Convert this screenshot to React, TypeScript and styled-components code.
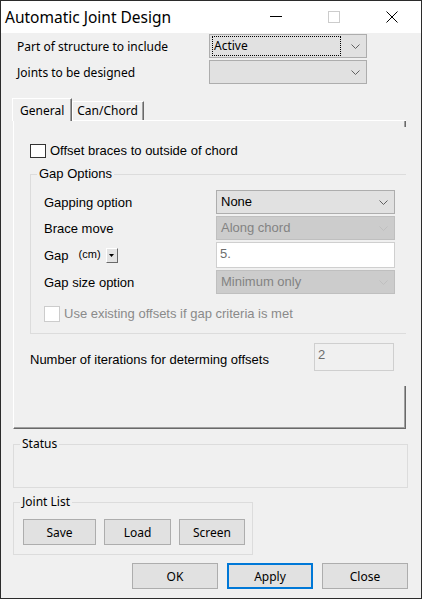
import React from 'react'
import styled, { createGlobalStyle } from 'styled-components'

const GlobalStyle = createGlobalStyle`
  html, body {
    margin: 0;
    padding: 0;
    background: #f0f0f0;
  }
  * {
    box-sizing: border-box;
  }
`

const ui = `"Noto Sans", "Open Sans", sans-serif`
const classic = `"Liberation Sans", Arial, sans-serif`

const Window = styled.div`
  width: 422px;
  height: 599px;
  border: 1px solid #2b2b2b;
  background: #f0f0f0;
  display: flex;
  flex-direction: column;
  font-family: ${ui};
  font-size: 12px;
  color: #000;
`

const TitleBar = styled.div`
  height: 32px;
  background: #fff;
  display: flex;
  align-items: center;
`

const Title = styled.div`
  flex: 1;
  padding-left: 4px;
  font-size: 15.5px;
  color: #000;
`

const CaptionButton = styled.div`
  width: 58px;
  height: 32px;
  display: flex;
  align-items: center;
  justify-content: center;
`

const Content = styled.div`
  flex: 1;
  display: flex;
  flex-direction: column;
  padding: 1px 13px 9px 12px;
`

const TopRows = styled.div`
  display: flex;
  flex-direction: column;
  gap: 2px;
`

const TopRow = styled.div`
  display: grid;
  grid-template-columns: 196px 158px;
  align-items: center;
  height: 24px;
`

const TopLabel = styled.div`
  padding-left: 4px;
`

const Combo = styled.div<{ $disabled?: boolean; $classic?: boolean }>`
  height: 24px;
  display: flex;
  align-items: center;
  padding: 0 6px 0 2px;
  border: 1px solid ${p => (p.$disabled ? '#bfbfbf' : '#adadad')};
  background: ${p => (p.$disabled ? '#cccccc' : '#e1e1e1')};
  color: ${p => (p.$disabled ? '#838383' : '#000')};
  font-family: ${p => (p.$classic ? classic : ui)};
  font-size: ${p => (p.$classic ? '13px' : '12px')};
`

const ComboText = styled.div<{ $focused?: boolean }>`
  flex: 1;
  height: 20px;
  line-height: 18px;
  margin-right: 10px;
  padding-left: 1px;
  border: 1px dotted ${p => (p.$focused ? '#000' : 'transparent')};
  white-space: nowrap;
`

const TabStrip = styled.div`
  margin-top: 14px;
  display: flex;
  align-items: flex-end;
  height: 22px;
`

const Tab = styled.div<{ $active?: boolean }>`
  position: relative;
  z-index: 1;
  height: ${p => (p.$active ? '23px' : '19px')};
  margin-bottom: ${p => (p.$active ? '-1px' : '0')};
  margin-left: ${p => (p.$active ? '-1px' : '0')};
  padding: ${p => (p.$active ? '3px 7px 0 7px' : '0 5px 0 4px')};
  background: #f0f0f0;
  border-top: 1px solid #fff;
  border-left: 1px solid #fff;
  border-right: 1px solid #696969;
  box-shadow: inset -1px 0 #a0a0a0;
  line-height: 18px;
`

const Panel = styled.div`
  height: 309px;
  width: 393px;
  border-top: 1px solid #fff;
  border-left: 1px solid #fff;
  border-bottom: 1px solid #696969;
  box-shadow: inset 0 -1px #a0a0a0;
  display: flex;
  flex-direction: column;
`

const PanelEdge = styled.div<{ $h: number }>`
  height: ${p => p.$h}px;
  border-right: 1px solid #696969;
  box-shadow: inset -1px 0 #a0a0a0;
`

const Page = styled.div`
  height: 259px;
  padding: 16px 0 0 16px;
  display: flex;
  flex-direction: column;
  font-family: ${classic};
  font-size: 13px;
`

const CheckRow = styled.label<{ $disabled?: boolean }>`
  display: flex;
  align-items: center;
  gap: 4px;
  height: 15px;
  color: ${p => (p.$disabled ? '#8a8a8a' : '#000')};
`

const CheckBox = styled.span<{ $disabled?: boolean }>`
  width: 16px;
  height: ${p => (p.$disabled ? '16px' : '14px')};
  background: #fff;
  border: 1px solid ${p => (p.$disabled ? '#cccccc' : '#333333')};
`

const Group = styled.div<{ $open?: boolean }>`
  position: relative;
  border: 1px solid #dcdcdc;
  border-right: ${p => (p.$open ? 'none' : '1px solid #dcdcdc')};
`

const GroupCaption = styled.span`
  position: absolute;
  top: -9px;
  left: 6px;
  padding: 0 2px;
  line-height: 16px;
  background: #f0f0f0;
`

const GapGroup = styled(Group)`
  margin-top: 16px;
  padding: 15px 0 12px 13px;
  display: flex;
  flex-direction: column;
`

const FieldGrid = styled.div`
  display: grid;
  grid-template-columns: 172px 179px;
  row-gap: 2px;
  align-items: center;
  margin-bottom: 12px;
`

const FieldLabel = styled.div`
  display: flex;
  align-items: center;
`

const Unit = styled.span`
  font-size: 11px;
  margin: -2px 5px 0 10px;
`

const UnitButton = styled.span`
  width: 12px;
  height: 15px;
  background: #e3e3e3;
  border-top: 1px solid #fff;
  border-left: 1px solid #fff;
  border-right: 1px solid #696969;
  border-bottom: 1px solid #696969;
  display: flex;
  align-items: center;
  justify-content: center;
`

const TextField = styled.div<{ $h: number; $bg: string }>`
  height: ${p => p.$h}px;
  border: 1px solid #cfcfcf;
  background: ${p => p.$bg};
  color: #6d6d6d;
  padding: 3px 0 0 3px;
  line-height: 15px;
`

const IterRow = styled.div`
  margin-top: 9px;
  display: grid;
  grid-template-columns: 284px 80px;
  align-items: center;
`

const IterLabel = styled.div`
  padding-top: 4px;
`

const StatusGroup = styled(Group)`
  margin-top: 15px;
  height: 44px;
`

const JointGroup = styled(Group)`
  margin-top: 14px;
  width: 240px;
  padding: 16px 0 9px 9px;
  display: flex;
  gap: 8px;
`

const Button = styled.button<{ $w: number; $default?: boolean }>`
  width: ${p => p.$w}px;
  height: 26px;
  margin: 0;
  padding: 0;
  background: #e1e1e1;
  border: ${p => (p.$default ? '2px solid #0078d7' : '1px solid #adadad')};
  font-family: ${ui};
  font-size: 12px;
  color: #000;
`

const ButtonBar = styled.div`
  margin-top: 8px;
  display: flex;
  justify-content: flex-end;
  gap: 9px;
`

const Chevron = ({ color = '#606060' }: { color?: string }) => (
  <svg width="9" height="5" viewBox="0 0 9 5">
    <polyline points="0.5,0.5 4.5,4.5 8.5,0.5" fill="none" stroke={color} strokeWidth="1" />
  </svg>
)

export default function App() {
  return (
    <>
      <GlobalStyle />
      <Window>
        <TitleBar>
          <Title>Automatic Joint Design</Title>
          <CaptionButton>
            <svg width="12" height="12" viewBox="0 0 12 12">
              <line x1="0" y1="5.5" x2="12" y2="5.5" stroke="#000" strokeWidth="1" />
            </svg>
          </CaptionButton>
          <CaptionButton>
            <svg width="12" height="12" viewBox="0 0 12 12">
              <rect x="0.5" y="0.5" width="11" height="11" fill="none" stroke="#cccccc" strokeWidth="1" />
            </svg>
          </CaptionButton>
          <CaptionButton>
            <svg width="12" height="12" viewBox="0 0 12 12">
              <path d="M0.5 0.5 L11.5 11.5 M11.5 0.5 L0.5 11.5" stroke="#000" strokeWidth="1" />
            </svg>
          </CaptionButton>
        </TitleBar>

        <Content>
          <TopRows>
            <TopRow>
              <TopLabel>Part of structure to include</TopLabel>
              <Combo>
                <ComboText $focused>Active</ComboText>
                <Chevron />
              </Combo>
            </TopRow>
            <TopRow>
              <TopLabel>Joints to be designed</TopLabel>
              <Combo>
                <ComboText />
                <Chevron />
              </Combo>
            </TopRow>
          </TopRows>

          <TabStrip>
            <Tab $active>General</Tab>
            <Tab>Can/Chord</Tab>
          </TabStrip>
          <Panel>
            <PanelEdge $h={6} />
            <Page>
              <CheckRow>
                <CheckBox />
                Offset braces to outside of chord
              </CheckRow>

              <GapGroup $open>
                <GroupCaption>Gap Options</GroupCaption>
                <FieldGrid>
                  <FieldLabel>Gapping option</FieldLabel>
                  <Combo $classic>
                    <ComboText>None</ComboText>
                    <Chevron />
                  </Combo>

                  <FieldLabel>Brace move</FieldLabel>
                  <Combo $classic $disabled>
                    <ComboText>Along chord</ComboText>
                    <Chevron color="#bfbfbf" />
                  </Combo>

                  <FieldLabel>
                    Gap
                    <Unit>(cm)</Unit>
                    <UnitButton>
                      <svg width="5" height="3" viewBox="0 0 5 3">
                        <polygon points="0,0 5,0 2.5,3" fill="#000" />
                      </svg>
                    </UnitButton>
                  </FieldLabel>
                  <TextField $h={26} $bg="#ffffff">5.</TextField>

                  <FieldLabel>Gap size option</FieldLabel>
                  <Combo $classic $disabled>
                    <ComboText>Minimum only</ComboText>
                    <Chevron color="#bfbfbf" />
                  </Combo>
                </FieldGrid>
                <CheckRow $disabled>
                  <CheckBox $disabled />
                  Use existing offsets if gap criteria is met
                </CheckRow>
              </GapGroup>

              <IterRow>
                <IterLabel>Number of iterations for determing offsets</IterLabel>
                <TextField $h={28} $bg="#f0f0f0">2</TextField>
              </IterRow>
            </Page>
            <PanelEdge $h={42} />
          </Panel>

          <StatusGroup>
            <GroupCaption>Status</GroupCaption>
          </StatusGroup>

          <JointGroup>
            <GroupCaption>Joint List</GroupCaption>
            <Button $w={73}>Save</Button>
            <Button $w={67}>Load</Button>
            <Button $w={66}>Screen</Button>
          </JointGroup>

          <ButtonBar>
            <Button $w={86}>OK</Button>
            <Button $w={86} $default>Apply</Button>
            <Button $w={86}>Close</Button>
          </ButtonBar>
        </Content>
      </Window>
    </>
  )
}
